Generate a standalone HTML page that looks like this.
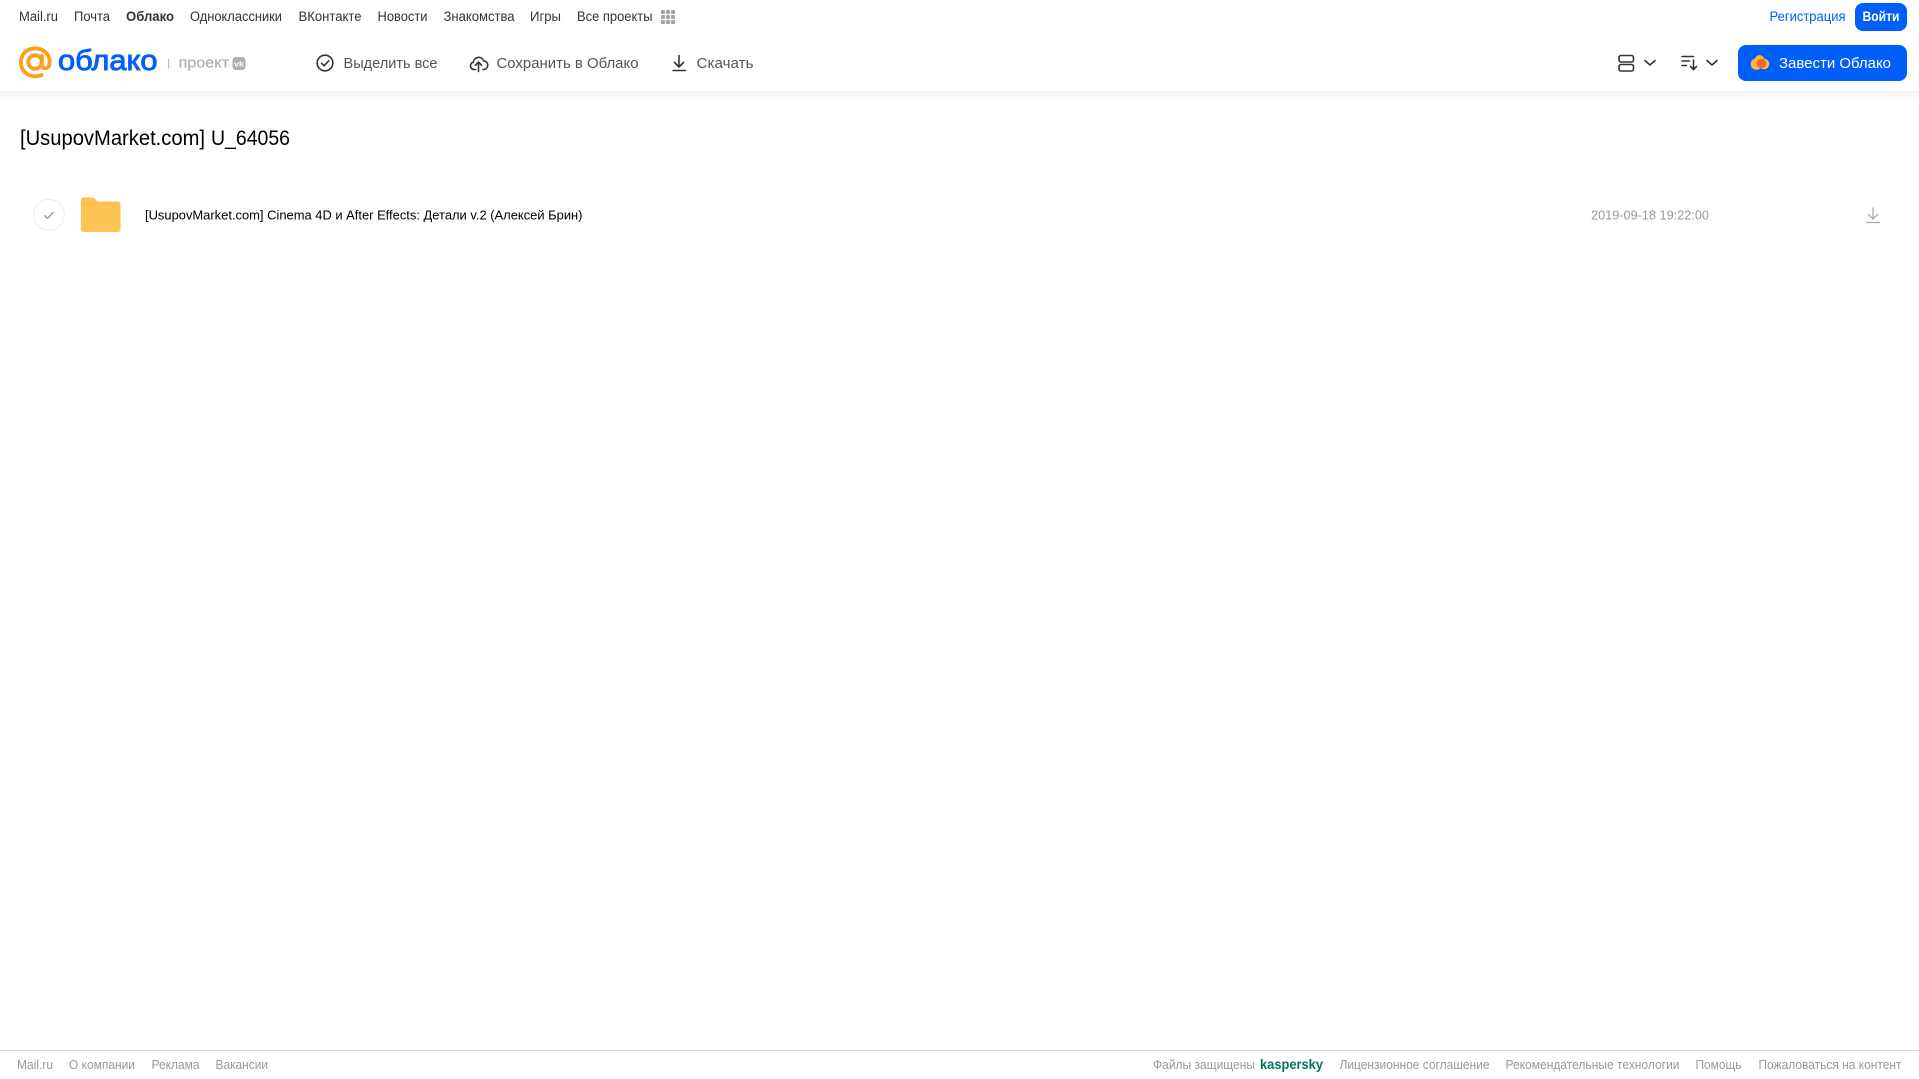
<!DOCTYPE html>
<html lang="ru">
<head>
<meta charset="utf-8">
<title>Облако</title>
<style>
html,body{margin:0;padding:0;width:1919px;height:1079px;overflow:hidden;background:#fff}
svg{display:block;position:absolute;left:0;top:0}
text{font-family:"Liberation Sans",Arial,sans-serif;white-space:pre}
.n{font-size:13.5px;fill:#333}
.a{font-size:14.5px;fill:#555}
.f{font-size:12.5px;fill:#999}
.ic{fill:none;stroke:#333;stroke-width:1.6;stroke-linecap:round;stroke-linejoin:round}
</style>
</head>
<body>
<svg width="1919" height="1079" viewBox="0 0 1919 1079" xmlns="http://www.w3.org/2000/svg">
<defs>
<linearGradient id="sh" x1="0" y1="0" x2="0" y2="1"><stop offset="0" stop-color="#f2f2f2"/><stop offset="1" stop-color="#fff"/></linearGradient>
<linearGradient id="fo" x1="0" y1="0" x2="0" y2="1"><stop offset="0" stop-color="#ffc24f"/><stop offset="1" stop-color="#ffc557"/></linearGradient>
</defs>
<rect x="0" y="91" width="1919" height="9" fill="url(#sh)"/>

<!-- top nav -->
<text class="n" x="19" y="21" textLength="39" lengthAdjust="spacingAndGlyphs">Mail.ru</text>
<text class="n" x="74" y="21" textLength="36" lengthAdjust="spacingAndGlyphs">Почта</text>
<text class="n" x="126" y="21" textLength="48" lengthAdjust="spacingAndGlyphs" font-weight="700">Облако</text>
<text class="n" x="190" y="21" textLength="92" lengthAdjust="spacingAndGlyphs">Одноклассники</text>
<text class="n" x="298.5" y="21" textLength="63" lengthAdjust="spacingAndGlyphs">ВКонтакте</text>
<text class="n" x="377.5" y="21" textLength="50" lengthAdjust="spacingAndGlyphs">Новости</text>
<text class="n" x="443.5" y="21" textLength="71" lengthAdjust="spacingAndGlyphs">Знакомства</text>
<text class="n" x="530" y="21" textLength="31" lengthAdjust="spacingAndGlyphs">Игры</text>
<text class="n" x="577" y="21" textLength="75.500" lengthAdjust="spacingAndGlyphs">Все проекты</text>
<g fill="#a3a3a3">
<rect x="661" y="10" width="4" height="4" rx="1"/><rect x="666" y="10" width="4" height="4" rx="1"/><rect x="671" y="10" width="4" height="4" rx="1"/>
<rect x="661" y="15" width="4" height="4" rx="1"/><rect x="666" y="15" width="4" height="4" rx="1"/><rect x="671" y="15" width="4" height="4" rx="1"/>
<rect x="661" y="20" width="4" height="4" rx="1"/><rect x="666" y="20" width="4" height="4" rx="1"/><rect x="671" y="20" width="4" height="4" rx="1"/>
</g>

<text class="n" x="1769.5" y="21" textLength="76" lengthAdjust="spacingAndGlyphs" style="fill:#005ff9">Регистрация</text>
<rect x="1855" y="3" width="52" height="28" rx="8" fill="#005ff9"/>
<text x="1862.500" y="21" font-size="13.500" font-weight="700" fill="#fff" textLength="37" lengthAdjust="spacingAndGlyphs">Войти</text>

<!-- logo -->
<g fill="none" stroke="#f9a11b" stroke-width="3.800" stroke-linecap="round">
<circle cx="35" cy="62" r="6.800"/>
<path d="M41.800 56v8.200c0 2.800 1.500 4.200 3.500 4.200 2.600 0 4.400-2.700 4.400-6.400 0-8-6.600-13.700-14.700-13.700S20.900 54.200 20.900 62.400 27.300 76.300 35 76.300c2.500 0 4.700-.4 6.700-1.300"/>
</g>
<text x="58" y="70" font-size="29" fill="#005ff9" stroke="#005ff9" stroke-width=".9" textLength="99.500" lengthAdjust="spacingAndGlyphs">облако</text>
<rect x="168" y="59" width="1" height="9.500" fill="#b5b5b5"/>
<text x="178.500" y="67.500" font-size="14.500" fill="#b0b0b0" stroke="#b0b0b0" stroke-width=".25" textLength="50.500" lengthAdjust="spacingAndGlyphs">проект</text>
<rect x="232.500" y="57" width="13" height="13" rx="3.500" fill="#b0b0b0"/>
<text x="234" y="66.500" font-size="7.500" font-weight="700" fill="#fff" textLength="10" lengthAdjust="spacingAndGlyphs">vk</text>

<!-- actions -->
<circle class="ic" cx="325" cy="63" r="7.800"/>
<path class="ic" d="M321.500 63.200l2.600 2.600 4.600-5"/>
<text class="a" x="343.500" y="68" textLength="94" lengthAdjust="spacingAndGlyphs">Выделить все</text>

<path class="ic" d="M475.500 69.500h-1.300a3.700 3.700 0 0 1-.9-7.300 5.400 5.400 0 0 1 10.400-1.400 4.400 4.400 0 0 1 .5 8.700h-1.200"/>
<path class="ic" d="M478.500 71.500v-9M475.400 65.300l3.100-3.200 3.100 3.200"/>
<text class="a" x="496.500" y="68" textLength="142" lengthAdjust="spacingAndGlyphs">Сохранить в Облако</text>

<path class="ic" d="M679 55.500v11M674.500 62.500l4.500 4.500 4.500-4.500M673 70.500h12.500"/>
<text class="a" x="696.500" y="68" textLength="57" lengthAdjust="spacingAndGlyphs">Скачать</text>

<!-- view and sort -->
<rect class="ic" x="1619" y="55.500" width="14.500" height="6.500" rx="2"/>
<rect class="ic" x="1619" y="64.500" width="14.500" height="6.500" rx="2"/>
<path class="ic" d="M1645 60.500l5 4.500 5-4.500"/>
<path class="ic" d="M1682 56.500h11.500M1682 61h7.500M1682 65.500h4.500" stroke-width="1.300"/>
<path class="ic" d="M1693.500 60v9M1690.500 66.500l3 3 3-3" stroke-width="1.300"/>
<path class="ic" d="M1707 60.500l5 4.500 5-4.500"/>

<rect x="1738" y="45" width="169" height="36" rx="8" fill="#005ff9"/>
<circle cx="1756.500" cy="64" r="5.800" fill="#ffb347"/>
<circle cx="1759.500" cy="59.500" r="4.500" fill="#ffb347"/>
<circle cx="1764" cy="64" r="5.300" fill="#ffb347"/>
<circle cx="1761.500" cy="63.500" r="4.800" fill="#f26a22"/>
<text x="1779" y="68" font-size="14.500" fill="#fff" textLength="112" lengthAdjust="spacingAndGlyphs">Завести Облако</text>

<!-- title -->
<text x="20" y="145" font-size="21" fill="#000" textLength="185" lengthAdjust="spacingAndGlyphs">[UsupovMarket.com]</text>
<text x="211" y="145" font-size="21" fill="#000" textLength="79" lengthAdjust="spacingAndGlyphs">U_64056</text>

<!-- row -->
<circle cx="48.800" cy="215" r="15.500" fill="#fff" stroke="#ececec" stroke-width="1"/>
<path d="M44.500 215.500l3 3 5.500-6" fill="none" stroke="#999" stroke-width="1.300" stroke-linecap="round" stroke-linejoin="round"/>
<path d="M81 200a2.500 2.500 0 0 1 2.500-2.500h8.500c2 0 3 .8 3.800 2l1.200 2h20.800a3 3 0 0 1 2.700 3V229.500a2.500 2.500 0 0 1-2.500 2.500H83.500a2.500 2.500 0 0 1-2.500-2.500z" fill="url(#fo)"/>
<rect x="81" y="203.500" width="39.500" height="1" fill="#ffb52f" opacity=".7"/>
<text x="145" y="219.500" font-size="13" fill="#000" textLength="437.500" lengthAdjust="spacingAndGlyphs">[UsupovMarket.com] Cinema 4D и After Effects: Детали v.2 (Алексей Брин)</text>
<text x="1591" y="219.500" font-size="13" fill="#999" textLength="118" lengthAdjust="spacingAndGlyphs">2019-09-18 19:22:00</text>
<path d="M1873 208v11M1868.500 214.500l4.500 4.500 4.500-4.500M1867 222.500h12.500" fill="none" stroke="#aaa" stroke-width="1.300" stroke-linecap="round" stroke-linejoin="round"/>

<!-- footer -->
<rect x="0" y="1050" width="1919" height="1" fill="#dcdcdc"/>
<text class="f" x="17" y="1069" textLength="36" lengthAdjust="spacingAndGlyphs">Mail.ru</text>
<text class="f" x="69" y="1069" textLength="66" lengthAdjust="spacingAndGlyphs">О компании</text>
<text class="f" x="151.500" y="1069" textLength="48" lengthAdjust="spacingAndGlyphs">Реклама</text>
<text class="f" x="215.500" y="1069" textLength="52.500" lengthAdjust="spacingAndGlyphs">Вакансии</text>

<text class="f" x="1153" y="1069" textLength="102" lengthAdjust="spacingAndGlyphs">Файлы защищены</text>
<text x="1260" y="1069" font-size="13.500" font-weight="700" fill="#00755f" textLength="63" lengthAdjust="spacingAndGlyphs">kaspersky</text>
<text class="f" x="1339.500" y="1069" textLength="150" lengthAdjust="spacingAndGlyphs">Лицензионное соглашение</text>
<text class="f" x="1505.500" y="1069" textLength="174" lengthAdjust="spacingAndGlyphs">Рекомендательные технологии</text>
<text class="f" x="1695.500" y="1069" textLength="46" lengthAdjust="spacingAndGlyphs">Помощь</text>
<text class="f" x="1758.500" y="1069" textLength="143" lengthAdjust="spacingAndGlyphs">Пожаловаться на контент</text>
</svg>
</body>
</html>
